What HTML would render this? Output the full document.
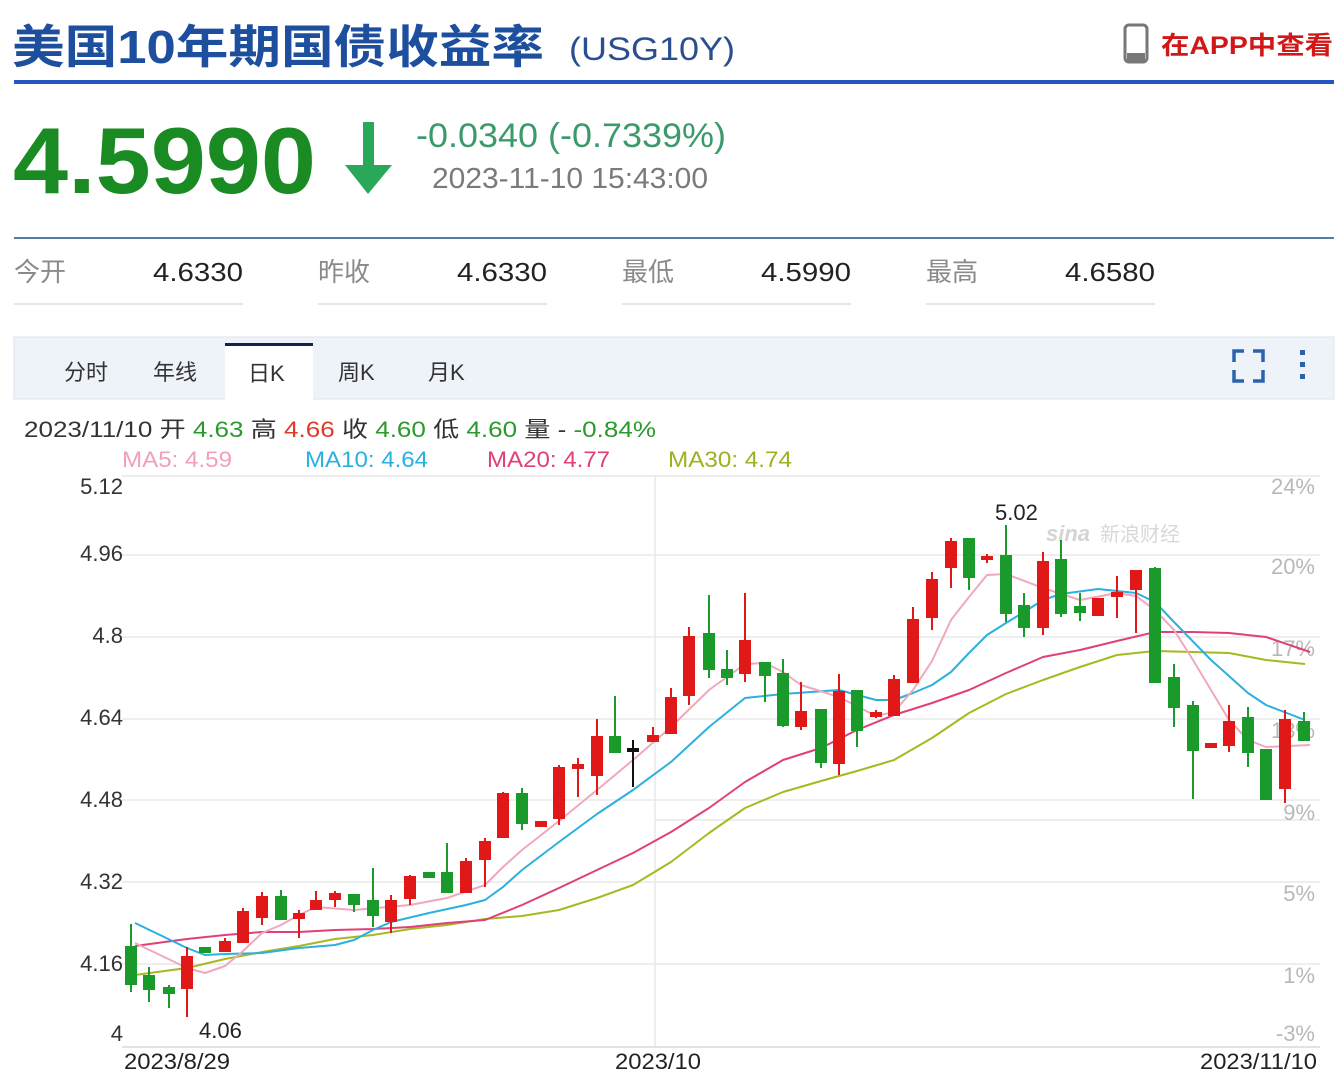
<!DOCTYPE html>
<html><head><meta charset="utf-8"><style>
html,body{margin:0;padding:0;background:#fff;width:1338px;height:1072px;overflow:hidden}
svg{display:block}
text{font-family:"Liberation Sans","Noto Sans CJK SC",sans-serif}
</style></head><body>
<svg width="1338" height="1072" viewBox="0 0 1338 1072" xmlns="http://www.w3.org/2000/svg">
<!-- header -->
<text x="12" y="63" font-size="46" font-weight="bold" fill="#1d4f9e" textLength="532" lengthAdjust="spacingAndGlyphs">美国10年期国债收益率</text>
<text x="569" y="60" font-size="32" fill="#2a4f8e" textLength="166" lengthAdjust="spacingAndGlyphs">(USG10Y)</text>
<rect x="1125" y="25" width="22" height="37" rx="4" fill="none" stroke="#777" stroke-width="3"/>
<rect x="1127" y="53" width="18" height="8" fill="#777"/>
<text x="1161" y="54" font-size="25" font-weight="bold" fill="#d01818" textLength="172" lengthAdjust="spacingAndGlyphs">在APP中查看</text>
<rect x="14" y="80" width="1320" height="4" fill="#2455c0"/>
<!-- price -->
<text x="13" y="193" font-size="94" font-weight="bold" fill="#1a8a22" textLength="303" lengthAdjust="spacingAndGlyphs">4.5990</text>
<rect x="363" y="122" width="11" height="45" fill="#2aa85a"/>
<polygon points="345,165 392,165 368,194" fill="#2aa85a"/>
<text x="416" y="147" font-size="34" fill="#3a9a6a" textLength="310" lengthAdjust="spacingAndGlyphs">-0.0340 (-0.7339%)</text>
<text x="432" y="188" font-size="29" fill="#7a7a7a" textLength="276" lengthAdjust="spacingAndGlyphs">2023-11-10 15:43:00</text>
<rect x="14" y="237" width="1320" height="2" fill="#4f80a8"/>
<!-- stats -->
<g font-size="26">
<text x="14" y="281" fill="#8a8a8a">今开</text><text x="153" y="281" fill="#222" textLength="90" lengthAdjust="spacingAndGlyphs">4.6330</text>
<text x="318" y="281" fill="#8a8a8a">昨收</text><text x="457" y="281" fill="#222" textLength="90" lengthAdjust="spacingAndGlyphs">4.6330</text>
<text x="622" y="281" fill="#8a8a8a">最低</text><text x="761" y="281" fill="#222" textLength="90" lengthAdjust="spacingAndGlyphs">4.5990</text>
<text x="926" y="281" fill="#8a8a8a">最高</text><text x="1065" y="281" fill="#222" textLength="90" lengthAdjust="spacingAndGlyphs">4.6580</text>
</g>
<g fill="#e6e6e6"><rect x="14" y="303" width="229" height="2"/><rect x="318" y="303" width="229" height="2"/><rect x="622" y="303" width="229" height="2"/><rect x="926" y="303" width="229" height="2"/></g>
<!-- tabs -->
<rect x="14" y="337" width="1320" height="62" fill="#eef3fa" stroke="#dde5ef"/>
<rect x="225" y="343" width="88" height="57" fill="#fff"/>
<rect x="225" y="343" width="88" height="3" fill="#0d2550"/>
<g font-size="22" fill="#333">
<text x="64" y="380">分时</text><text x="153" y="380">年线</text><text x="248" y="381">日K</text><text x="338" y="380">周K</text><text x="428" y="380">月K</text>
</g>
<g stroke="#2a62b0" stroke-width="3.5" fill="none">
<path d="M1234 362V351H1244M1253 351H1263V362M1263 370V381H1253M1244 381H1234V370"/>
</g>
<g fill="#2a62b0"><rect x="1300" y="350" width="5" height="5"/><rect x="1300" y="362" width="5" height="5"/><rect x="1300" y="374" width="5" height="5"/></g>
<!-- info -->
<g font-size="22">
<text x="24" y="437" textLength="632" lengthAdjust="spacingAndGlyphs"><tspan fill="#333">2023/11/10 开 </tspan><tspan fill="#2a9a2a">4.63</tspan><tspan fill="#333"> 高 </tspan><tspan fill="#e03a2a">4.66</tspan><tspan fill="#333"> 收 </tspan><tspan fill="#2a9a2a">4.60</tspan><tspan fill="#333"> 低 </tspan><tspan fill="#2a9a2a">4.60</tspan><tspan fill="#333"> 量 - </tspan><tspan fill="#2a9a2a">-0.84%</tspan></text>
<text x="122" y="467" fill="#f0a0bc" textLength="110" lengthAdjust="spacingAndGlyphs">MA5: 4.59</text>
<text x="305" y="467" fill="#2ab0e0" textLength="123" lengthAdjust="spacingAndGlyphs">MA10: 4.64</text>
<text x="487" y="467" fill="#e0407a" textLength="123" lengthAdjust="spacingAndGlyphs">MA20: 4.77</text>
<text x="668" y="467" fill="#a0b020" textLength="124" lengthAdjust="spacingAndGlyphs">MA30: 4.74</text>
</g>
<!-- grid -->
<g stroke="#e8e8e8" stroke-width="1.5">
<line x1="122" y1="476" x2="1320" y2="476"/><line x1="122" y1="555" x2="1320" y2="555"/><line x1="122" y1="637" x2="1320" y2="637"/><line x1="122" y1="719" x2="1320" y2="719"/><line x1="122" y1="800" x2="1320" y2="800"/><line x1="655" y1="820" x2="1320" y2="820"/><line x1="122" y1="882" x2="1320" y2="882"/><line x1="122" y1="964" x2="1320" y2="964"/><line x1="655" y1="476" x2="655" y2="1047"/>
</g>
<line x1="122" y1="1047" x2="1320" y2="1047" stroke="#d8d8d8" stroke-width="1.5"/>
<g font-size="22" fill="#333" text-anchor="end">
<text x="123" y="494">5.12</text><text x="123" y="561">4.96</text><text x="123" y="643">4.8</text><text x="123" y="725">4.64</text><text x="123" y="807">4.48</text><text x="123" y="889">4.32</text><text x="123" y="971">4.16</text><text x="123" y="1041">4</text>
</g>
<g font-size="22" fill="#b8b8b8" text-anchor="end">
<text x="1315" y="494">24%</text><text x="1315" y="574">20%</text><text x="1315" y="656">17%</text><text x="1315" y="738">13%</text><text x="1315" y="820">9%</text><text x="1315" y="901">5%</text><text x="1315" y="983">1%</text><text x="1315" y="1041">-3%</text>
</g>
<text x="1046" y="541" font-size="22" font-style="italic" font-weight="bold" fill="#d4d4d4">sina</text>
<text x="1100" y="541" font-size="20" fill="#d8d8d8">新浪财经</text>
<g font-size="22" fill="#222">
<text x="124" y="1069" textLength="106" lengthAdjust="spacingAndGlyphs">2023/8/29</text><text x="615" y="1069" textLength="86" lengthAdjust="spacingAndGlyphs">2023/10</text><text x="1200" y="1069" textLength="117" lengthAdjust="spacingAndGlyphs">2023/11/10</text>
<text x="199" y="1038">4.06</text><text x="995" y="520">5.02</text>
</g>
<!-- MAs -->
<g fill="none" stroke-width="2" stroke-linejoin="round">
<polyline stroke="#a8b820" points="135,975 187,968 225,959 262,952 299,946 335,939 373,935 410,929 447,925 485,919 522,916 559,910 597,898 633,885 671,862 709,833 745,808 783,792 821,781 857,771 894,760 932,738 969,713 1006,694 1043,680 1080,667 1117,655 1155,651 1193,652 1229,653 1266,660 1305,664"/>
<polyline stroke="#e0407a" points="135,946 187,939 225,935 262,932 299,932 335,930 373,929 410,927 447,923 485,920 522,905 559,888 597,870 633,853 671,832 709,808 745,782 783,760 821,748 857,730 894,715 932,703 969,690 1006,673 1043,657 1080,650 1117,641 1155,632 1193,632 1229,633 1266,637 1310,652"/>
<polyline stroke="#2bb0e0" points="135,923 160,935 187,948 205,955 225,954 262,953 299,948 335,945 354,940 373,930 391,922 429,913 466,905 485,900 503,887 522,870 559,842 597,814 633,790 671,762 709,727 745,698 783,694 839,690 876,700 894,700 913,693 932,685 951,672 969,653 987,635 1006,623 1024,612 1043,600 1061,594 1098,589 1136,593 1155,602 1174,622 1211,660 1248,693 1266,705 1305,720"/>
<polyline stroke="#f0a8bc" points="135,943 160,955 187,968 205,973 225,966 243,951 262,933 281,925 299,915 316,907 354,910 410,905 447,898 485,885 503,867 522,850 559,821 597,790 633,760 671,727 709,690 745,664 765,663 783,672 801,685 839,697 876,716 894,712 913,690 932,661 951,620 969,597 987,575 1006,574 1043,588 1080,600 1117,593 1136,596 1155,610 1174,630 1193,660 1229,720 1248,740 1266,747 1310,745"/>
</g>
<!-- candles -->
<g stroke-width="2">
<g stroke="#1a9a2a" fill="#1a9a2a">
<line x1="131" y1="924" x2="131" y2="992"/><rect x="126" y="947" width="10" height="37"/>
<line x1="149" y1="967" x2="149" y2="1002"/><rect x="144" y="976" width="10" height="13"/>
<line x1="169" y1="985" x2="169" y2="1008"/><rect x="164" y="988" width="10" height="5"/>
<rect x="200" y="948" width="10" height="4"/>
<line x1="281" y1="890" x2="281" y2="920"/><rect x="276" y="897" width="10" height="22"/>
<line x1="354" y1="894" x2="354" y2="912"/><rect x="349" y="895" width="10" height="9"/>
<line x1="373" y1="868" x2="373" y2="927"/><rect x="368" y="901" width="10" height="14"/>
<rect x="424" y="873" width="10" height="4"/>
<line x1="447" y1="843" x2="447" y2="893"/><rect x="442" y="873" width="10" height="19"/>
<line x1="522" y1="788" x2="522" y2="830"/><rect x="517" y="794" width="10" height="29"/>
<line x1="615" y1="696" x2="615" y2="753"/><rect x="610" y="737" width="10" height="15"/>
<line x1="709" y1="595" x2="709" y2="678"/><rect x="704" y="634" width="10" height="35"/>
<line x1="727" y1="650" x2="727" y2="685"/><rect x="722" y="670" width="10" height="7"/>
<line x1="765" y1="662" x2="765" y2="702"/><rect x="760" y="663" width="10" height="12"/>
<line x1="783" y1="659" x2="783" y2="727"/><rect x="778" y="674" width="10" height="51"/>
<line x1="821" y1="709" x2="821" y2="768"/><rect x="816" y="710" width="10" height="52"/>
<line x1="857" y1="690" x2="857" y2="747"/><rect x="852" y="691" width="10" height="39"/>
<line x1="969" y1="538" x2="969" y2="590"/><rect x="964" y="539" width="10" height="38"/>
<line x1="1006" y1="525" x2="1006" y2="622"/><rect x="1001" y="556" width="10" height="57"/>
<line x1="1024" y1="593" x2="1024" y2="637"/><rect x="1019" y="606" width="10" height="21"/>
<line x1="1061" y1="540" x2="1061" y2="617"/><rect x="1056" y="560" width="10" height="53"/>
<line x1="1080" y1="593" x2="1080" y2="621"/><rect x="1075" y="607" width="10" height="5"/>
<line x1="1155" y1="567" x2="1155" y2="683"/><rect x="1150" y="569" width="10" height="113"/>
<line x1="1174" y1="664" x2="1174" y2="727"/><rect x="1169" y="678" width="10" height="29"/>
<line x1="1193" y1="701" x2="1193" y2="799"/><rect x="1188" y="706" width="10" height="44"/>
<line x1="1248" y1="707" x2="1248" y2="767"/><rect x="1243" y="718" width="10" height="34"/>
<line x1="1266" y1="749" x2="1266" y2="800"/><rect x="1261" y="750" width="10" height="49"/>
<line x1="1304" y1="712" x2="1304" y2="741"/><rect x="1299" y="722" width="10" height="18"/>
</g>
<g stroke="#e01818" fill="#e01818">
<line x1="187" y1="947" x2="187" y2="1017"/><rect x="182" y="957" width="10" height="31"/>
<line x1="225" y1="938" x2="225" y2="952"/><rect x="220" y="942" width="10" height="9"/>
<line x1="243" y1="908" x2="243" y2="943"/><rect x="238" y="912" width="10" height="30"/>
<line x1="262" y1="892" x2="262" y2="925"/><rect x="257" y="897" width="10" height="20"/>
<line x1="299" y1="910" x2="299" y2="938"/><rect x="294" y="914" width="10" height="4"/>
<line x1="316" y1="891" x2="316" y2="910"/><rect x="311" y="901" width="10" height="8"/>
<line x1="335" y1="891" x2="335" y2="907"/><rect x="330" y="894" width="10" height="5"/>
<line x1="391" y1="895" x2="391" y2="933"/><rect x="386" y="901" width="10" height="20"/>
<line x1="410" y1="875" x2="410" y2="905"/><rect x="405" y="877" width="10" height="21"/>
<line x1="466" y1="858" x2="466" y2="893"/><rect x="461" y="862" width="10" height="30"/>
<line x1="485" y1="838" x2="485" y2="887"/><rect x="480" y="842" width="10" height="17"/>
<line x1="503" y1="792" x2="503" y2="838"/><rect x="498" y="794" width="10" height="43"/>
<rect x="536" y="822" width="10" height="4"/>
<line x1="559" y1="765" x2="559" y2="825"/><rect x="554" y="768" width="10" height="50"/>
<line x1="578" y1="758" x2="578" y2="797"/><rect x="573" y="765" width="10" height="3"/>
<line x1="597" y1="719" x2="597" y2="795"/><rect x="592" y="737" width="10" height="38"/>
<line x1="653" y1="727" x2="653" y2="742"/><rect x="648" y="736" width="10" height="5"/>
<line x1="671" y1="688" x2="671" y2="734"/><rect x="666" y="698" width="10" height="35"/>
<line x1="689" y1="627" x2="689" y2="705"/><rect x="684" y="637" width="10" height="58"/>
<line x1="745" y1="593" x2="745" y2="682"/><rect x="740" y="641" width="10" height="32"/>
<line x1="801" y1="682" x2="801" y2="730"/><rect x="796" y="712" width="10" height="14"/>
<line x1="839" y1="674" x2="839" y2="775"/><rect x="834" y="692" width="10" height="71"/>
<line x1="876" y1="710" x2="876" y2="718"/><rect x="871" y="713" width="10" height="3"/>
<line x1="894" y1="675" x2="894" y2="716"/><rect x="889" y="680" width="10" height="35"/>
<line x1="913" y1="607" x2="913" y2="683"/><rect x="908" y="620" width="10" height="62"/>
<line x1="932" y1="572" x2="932" y2="630"/><rect x="927" y="580" width="10" height="37"/>
<line x1="951" y1="538" x2="951" y2="588"/><rect x="946" y="542" width="10" height="25"/>
<line x1="987" y1="554" x2="987" y2="563"/><rect x="982" y="557" width="10" height="2"/>
<line x1="1043" y1="552" x2="1043" y2="635"/><rect x="1038" y="562" width="10" height="65"/>
<line x1="1098" y1="598" x2="1098" y2="616"/><rect x="1093" y="599" width="10" height="16"/>
<line x1="1117" y1="576" x2="1117" y2="618"/><rect x="1112" y="593" width="10" height="3"/>
<line x1="1136" y1="570" x2="1136" y2="633"/><rect x="1131" y="571" width="10" height="18"/>
<rect x="1206" y="744" width="10" height="3"/>
<line x1="1229" y1="705" x2="1229" y2="752"/><rect x="1224" y="722" width="10" height="23"/>
<line x1="1285" y1="710" x2="1285" y2="803"/><rect x="1280" y="720" width="10" height="68"/>
</g>
<g stroke="#111" fill="#111"><line x1="633" y1="740" x2="633" y2="787"/><rect x="628" y="749" width="10" height="2"/></g>
</g>
</svg>
</body></html>
